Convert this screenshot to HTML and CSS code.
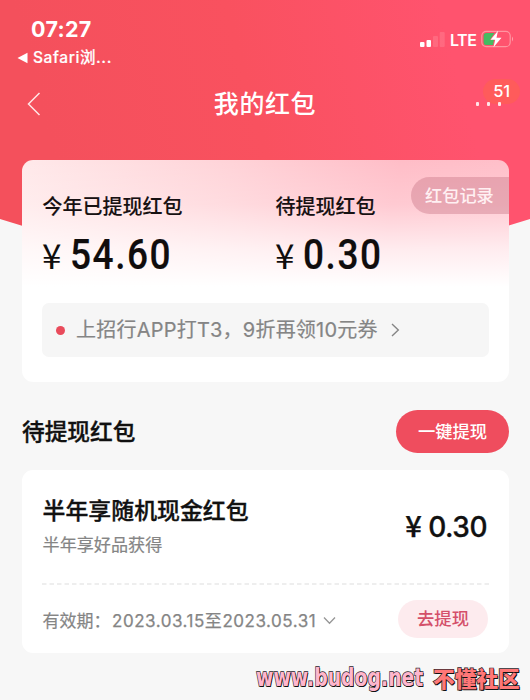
FILE: index.html
```html
<!DOCTYPE html>
<html lang="zh-CN">
<head>
<meta charset="utf-8">
<title>我的红包</title>
<link rel="stylesheet" href="styles.css">
</head>
<body>
<div class="screen">
  <div class="hero"></div>
  <header class="status">
    <div class="status-left">
      <div class="clock">07:27</div>
      <div class="back-app"><svg width="12" height="12" viewBox="0 0 12 12"><path d="M0.5 6 L10.5 0.8 V11.2 Z" fill="#fff"/></svg><span>Safari浏...</span></div>
    </div>
    <div class="status-right">
      <svg class="signal" width="25" height="15" viewBox="0 0 25 15"><rect x="0" y="10" width="4.5" height="5" rx="1" fill="#fff"/><rect x="6.5" y="8" width="4.5" height="7" rx="1" fill="#fff"/><rect x="13" y="4" width="5" height="11" rx="1" fill="#fff" opacity=".13"/><rect x="19.7" y="0" width="5" height="15" rx="1" fill="#fff" opacity=".13"/></svg>
      <span class="lte">LTE</span>
      <svg class="battery" width="34" height="18" viewBox="0 0 34 18"><rect x=".8" y="1.3" width="28.4" height="15.4" rx="4.5" fill="none" stroke="#ff95a0" stroke-width="1.2"/><path d="M31 6.5 Q33 9 31 11.5 Z" fill="#ffa4ae"/><path d="M5 3 H13.5 L9 9.8 H13 L12 15 H5 Q2.6 15 2.6 12.5 V5.5 Q2.6 3 5 3Z" fill="#45bb61"/><path d="M17 .8 L9.5 9.8 H14.2 L12.5 17.2 L20.5 7.8 H15.5 Z" fill="#fff"/></svg>
    </div>
  </header>
  <nav class="nav">
    <svg class="nav-back" width="14" height="24" viewBox="0 0 14 24"><path d="M12.5 1 L1.5 12 L12.5 23" fill="none" stroke="#ffe6e6" stroke-width="1.5"/></svg>
    <h1>我的红包</h1>
    <div class="more"><span class="badge">51</span><i></i><i></i><i></i></div>
  </nav>
  <section class="card summary">
    <span class="record">红包记录</span>
    <div class="totals">
      <div><div class="label">今年已提现红包</div><div class="amount"><span class="yen">¥</span><span class="num">54.60</span></div></div>
      <div><div class="label">待提现红包</div><div class="amount"><span class="yen">¥</span><span class="num">0.30</span></div></div>
    </div>
    <div class="notice"><i class="dot"></i><span>上招行APP打T3，9折再领10元券</span><svg width="9" height="14" viewBox="0 0 9 14"><path d="M1 1 L7.3 7 L1 13" fill="none" stroke="#858585" stroke-width="1.4"/></svg></div>
  </section>
  <div class="heading"><h2>待提现红包</h2><span class="all-btn">一键提现</span></div>
  <section class="card coupon">
    <div class="coupon-main">
      <div><h3>半年享随机现金红包</h3><p>半年享好品获得</p></div>
      <div class="price"><span class="price-yen">¥</span><span>0.30</span></div>
    </div>
    <svg class="divider" width="447" height="2" viewBox="0 0 447 2"><path d="M0 1 H447" stroke="#e9e9e9" stroke-width="1.5" stroke-dasharray="4.5 3"/></svg>
    <div class="coupon-foot">
      <span class="valid">有效期：</span><span class="dates">2023.03.15至2023.05.31</span>
      <svg class="expand" width="13" height="9" viewBox="0 0 13 9"><path d="M1 1.5 L6.5 7.3 L12 1.5" fill="none" stroke="#969696" stroke-width="1.3"/></svg>
      <span class="go">去提现</span>
    </div>
  </section>
  <footer class="mark"><span class="site">www.budog.net</span><span class="community">不懂社区</span></footer>
</div>
</body>
</html>
```
FILE: styles.css
```css
* { box-sizing: border-box; }
body { margin: 0; background: #f7f7f7; font-family: Inter, "Noto Sans CJK SC", sans-serif; }
h1, h2, h3, p { margin: 0; }
svg { display: block; flex: none; }
i { display: block; flex: none; }
span { white-space: nowrap; }
.screen { position: relative; width: 530px; height: 700px; overflow: hidden; display: flex; flex-direction: column; }
.screen > * { position: relative; flex: none; }
.screen > .hero { position: absolute; left: 0; top: 0; width: 530px; height: 300px; background: linear-gradient(75deg, #f4505c 15%, #f9515f 50%, #ff536e 85%); clip-path: polygon(0 0, 530px 0, 530px 219px, 265px 300px, 0 219px); }

.status { height: 76px; display: flex; justify-content: space-between; color: #fff; padding: 16px 15px 0 17px; }
.clock { font-size: 21.5px; font-weight: 700; line-height: 26px; padding-left: 14px; letter-spacing: .3px; }
.back-app { display: flex; align-items: center; gap: 4px; font-size: 15.5px; font-weight: 500; line-height: 20px; margin-top: 6px; letter-spacing: .6px; -webkit-text-stroke: .2px #fff; }
.status-right { display: flex; height: 18px; margin-top: 14px; align-items: center; }
.signal { margin-right: 1px; }
.lte { font-size: 16px; font-weight: 600; line-height: 18px; margin-left: 4px; width: 31px; letter-spacing: -.5px; padding-top: 1px; }

.nav { height: 84px; display: flex; padding: 0 26px 0 27px; justify-content: space-between; }
.nav-back { margin-top: 16px; }
.nav h1 { position: absolute; left: 0; width: 530px; text-align: center; top: 10px; font-size: 25px; line-height: 36px; font-weight: 500; color: #fff; letter-spacing: .6px; }
.more { position: relative; display: flex; gap: 8px; margin-top: 26px; width: 28px; height: 4px; }
.more i { position: relative; width: 3px; height: 4px; border-radius: 1px; background: #ffe4e8; }
.badge { position: absolute; left: 7px; top: -23px; width: 37px; height: 25px; border-radius: 13px; background: #ff5b5b; color: #fff; font-size: 16.5px; font-weight: 500; line-height: 25px; text-align: center; letter-spacing: -.3px; }

.card { width: 487px; margin-left: 22px; border-radius: 11px; background: #fff; }
.summary { height: 222px; padding: 31px 20px 0; background: linear-gradient(180deg, rgba(255,255,255,0) 0, rgba(255,255,255,.2) 20%, rgba(255,255,255,.7) 40%, #fff 57%), linear-gradient(100deg, #ffe9ea 0, #ffd3d8 40%, #ffbdc7 72%, #ffc0ca 100%); }
.record { position: absolute; right: 0; top: 17px; width: 98px; height: 37px; border-radius: 19px 0 0 19px; background: rgba(202,120,137,.43); color: #fff0f2; font-size: 17.2px; font-weight: 500; line-height: 38px; padding-left: 14px; }
.totals { display: grid; grid-template-columns: 233px 1fr; height: 112px; }
.label { font-size: 20px; line-height: 32px; font-weight: 500; color: #171112; padding-left: .6px; -webkit-text-stroke: .1px #171112; }
.amount { display: flex; align-items: baseline; margin-top: 9px; height: 44px; color: #100d0d; }
.yen { font-family: "Noto Sans CJK SC"; font-size: 35px; line-height: 44px; width: 28px; }
.num { font-family: Roboto; font-size: 43px; line-height: 44px; font-weight: 500; letter-spacing: 1.8px; transform: scaleX(.86); transform-origin: 0 0; -webkit-text-stroke: .2px #100d0d; }
.notice { display: flex; align-items: center; height: 54px; border-radius: 7px; background: #f6f6f6; color: #858585; padding: 0 14px; font-size: 20px; line-height: 28px; }
.dot { width: 9px; height: 9px; border-radius: 50%; background: #e94b5b; margin-right: 11px; }
.notice span { letter-spacing: .22px; margin-right: 13px; -webkit-text-stroke: .2px #858585; }

.heading { height: 88px; display: flex; justify-content: space-between; padding: 28px 21px 0 22px; }
.heading h2 { font-size: 22.7px; line-height: 44px; font-weight: 500; color: #101010; -webkit-text-stroke: .35px #101010; }
.all-btn { width: 113px; height: 43px; border-radius: 22px; background: #ef4d5e; color: #fff; text-align: center; font-size: 17.3px; line-height: 43px; font-weight: 500; }

.coupon { height: 183px; padding: 23px 21px 0 20px; }
.coupon-main { height: 90px; display: flex; justify-content: space-between; }
.coupon h3 { font-size: 22.9px; line-height: 36px; font-weight: 500; color: #111; padding-left: .6px; -webkit-text-stroke: .35px #111; }
.coupon p { font-size: 17.1px; line-height: 25px; margin-top: 3px; color: #858585; padding-left: .6px; -webkit-text-stroke: .2px #858585; }
.price { display: flex; align-items: baseline; font-size: 28px; font-weight: 500; color: #111; line-height: 36px; margin-top: 13px; letter-spacing: -.5px; padding-right: 1px; -webkit-text-stroke: .3px #111; }
.price-yen { width: 23px; font-family: "Noto Sans CJK SC"; font-weight: 500; font-size: 29px; line-height: 36px; }
.divider { margin-bottom: 15px; }
.coupon-foot { display: flex; align-items: center; height: 38px; color: #858585; font-size: 17px; }
.valid { width: 70px; font-size: 17px; padding-left: .6px; -webkit-text-stroke: .2px #858585; }
.dates { width: 206px; margin-right: 5px; letter-spacing: .53px; -webkit-text-stroke: .25px #858585; }
.expand { margin-top: 3px; }
.go { margin-left: auto; width: 90px; height: 38px; border-radius: 19px; background: #fdebee; color: #d4506a; text-align: center; font-size: 17.3px; line-height: 38px; font-weight: 500; }

.mark { height: 47px; display: flex; padding: 10px 0 0 256px; line-height: 30px; }
.site, .community { paint-order: stroke fill; -webkit-text-stroke: 1.4px #292329; text-shadow: 1px 1px 0 #111; font-weight: 700; transform-origin: 0 50%; }
.site { width: 177px; color: #ffb6cc; font-family: "DejaVu Sans"; font-size: 24px; transform: scaleX(.785); }
.community { color: #ff7777; font-family: "Noto Sans CJK SC"; font-weight: 900; font-size: 21.7px; }
```
